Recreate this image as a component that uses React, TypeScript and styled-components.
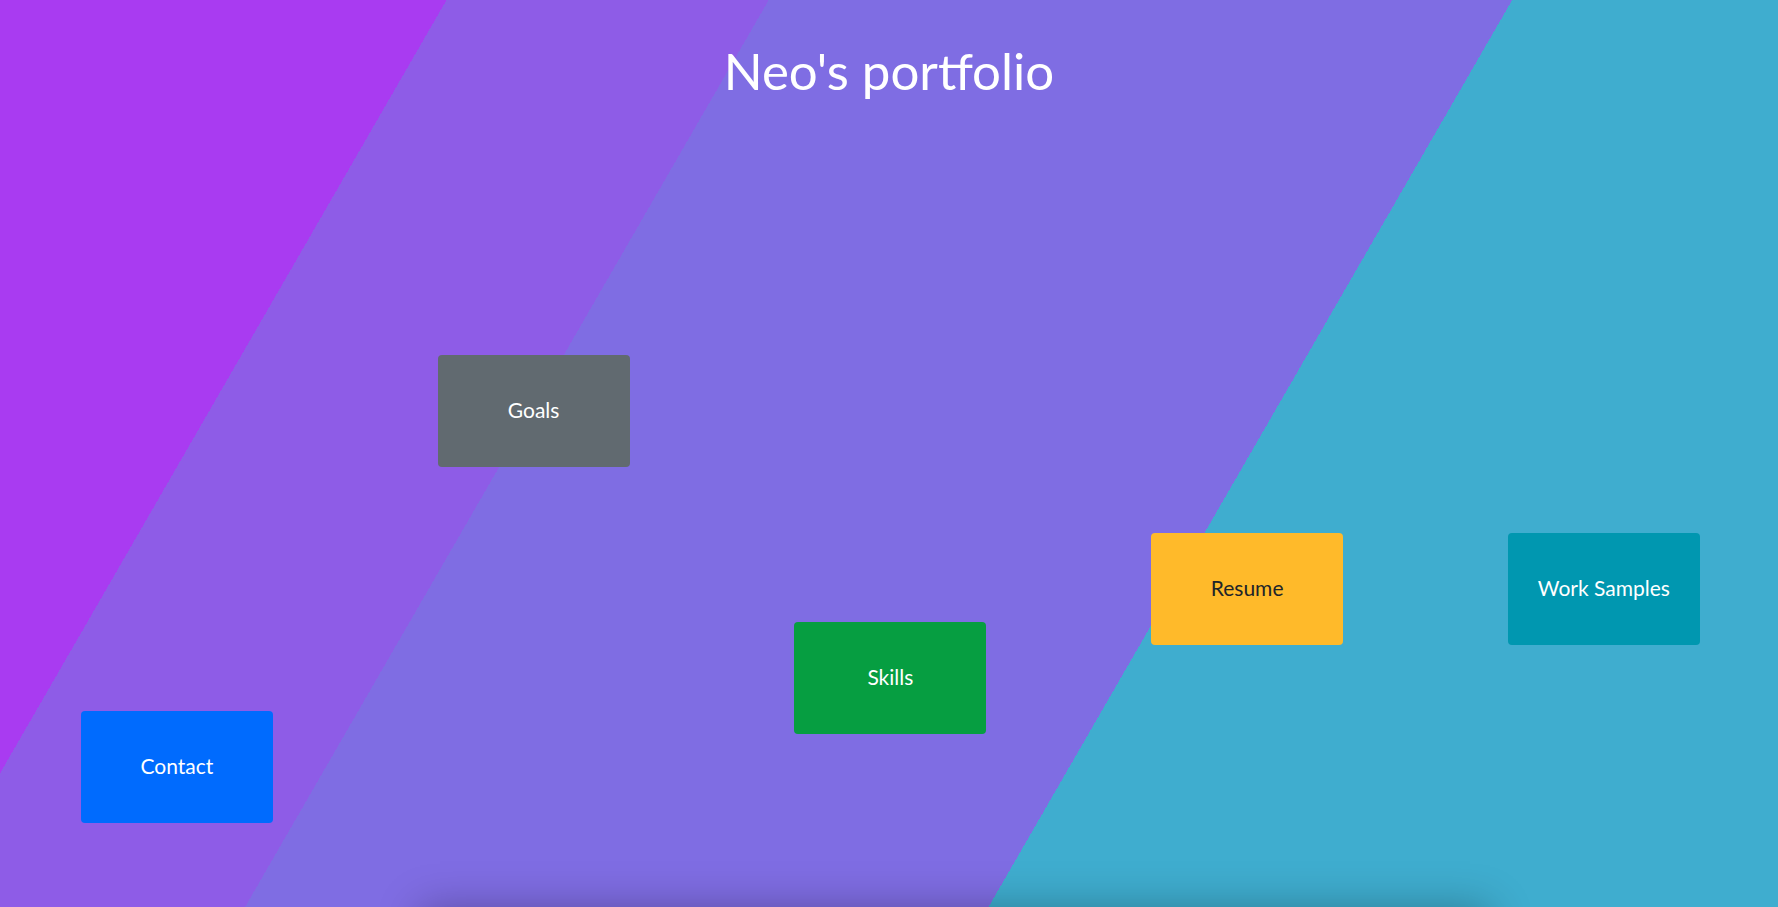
import React from "react";
import styled, { createGlobalStyle } from "styled-components";

const GlobalStyle = createGlobalStyle`
  html, body {
    margin: 0;
    padding: 0;
    overflow: hidden;
  }
  body {
    font-family: Lato, "Open Sans", sans-serif;
    background: #3fadcf;
  }
  * { box-sizing: border-box; }
`;

const Hero = styled.section`
  height: 907px;
  width: 100%;
  display: flex;
  flex-direction: column;
  background: linear-gradient(
    120deg,
    #a93bf1 0%,
    #a93bf1 19.4%,
    #8e5ce7 19.4%,
    #8e5ce7 33.4%,
    #7f6de3 33.4%,
    #7f6de3 65.7%,
    #3fadcf 65.7%,
    #3fadcf 100%
  );
`;

const Title = styled.h1`
  margin: 0;
  padding-top: 40px;
  font-family: Lato, "Open Sans", sans-serif;
  font-weight: 400;
  font-size: 51px;
  line-height: 1.2;
  color: #ffffff;
  text-align: center;
  height: 103px;
`;

const ButtonRow = styled.div`
  display: grid;
  grid-template-columns: repeat(5, 356.75px);
  align-items: start;
  margin-left: -1.5px;
`;

const Column = styled.div<{ $top: number }>`
  display: flex;
  justify-content: center;
  padding-top: ${(p) => p.$top}px;
`;

const NavButton = styled.button<{ $bg: string; $fg: string }>`
  width: 192px;
  height: 112px;
  border: none;
  border-radius: 4px;
  background: ${(p) => p.$bg};
  color: ${(p) => p.$fg};
  font-family: Lato, "Open Sans", sans-serif;
  font-size: 21px;
  display: flex;
  align-items: center;
  justify-content: center;
  padding: 0 0 3px 0;
  cursor: pointer;
`;

const Below = styled.section`
  margin-left: 420px;
  width: 1070px;
  height: 200px;
  box-shadow: 0 0 40px rgba(0, 0, 0, 0.28);
`;

const buttons = [
  { label: "Contact", bg: "#006bfe", fg: "#ffffff", top: 608 },
  { label: "Goals", bg: "#616a70", fg: "#ffffff", top: 252 },
  { label: "Skills", bg: "#069e41", fg: "#ffffff", top: 519 },
  { label: "Resume", bg: "#ffba2a", fg: "#212529", top: 430 },
  { label: "Work Samples", bg: "#0097b0", fg: "#ffffff", top: 430 },
];

export default function App() {
  return (
    <>
      <GlobalStyle />
      <Hero>
        <Title>Neo's portfolio</Title>
        <ButtonRow>
          {buttons.map((b) => (
            <Column key={b.label} $top={b.top}>
              <NavButton $bg={b.bg} $fg={b.fg}>
                {b.label}
              </NavButton>
            </Column>
          ))}
        </ButtonRow>
      </Hero>
      <Below />
    </>
  );
}
